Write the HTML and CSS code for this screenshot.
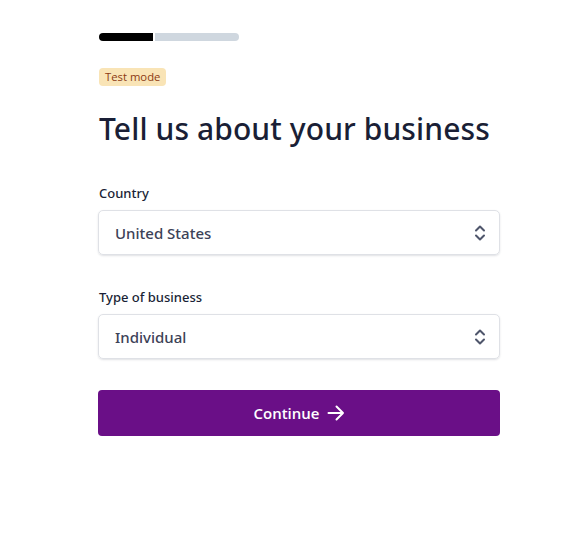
FILE: index.html
```html
<!DOCTYPE html>
<html>
<head>
<meta charset="utf-8">
<link rel="stylesheet" href="styles.css">
</head>
<body>
<main class="wrap">
  <div class="progress"><span class="done"></span><span class="todo"></span></div>
  <span class="badge">Test mode</span>
  <h1 class="title">Tell us about your business</h1>
  <div class="field">
    <label class="label">Country</label>
    <div class="select"><span>United States</span>
      <svg width="12" height="18" viewBox="0 0 12 18"><path d="M2 6.5L6 2.5L10 6.5M2 11.5L6 15.5L10 11.5" fill="none" stroke="#4f566b" stroke-width="2" stroke-linecap="round" stroke-linejoin="round"/></svg>
    </div>
  </div>
  <div class="field">
    <label class="label">Type of business</label>
    <div class="select"><span>Individual</span>
      <svg width="12" height="18" viewBox="0 0 12 18"><path d="M2 6.5L6 2.5L10 6.5M2 11.5L6 15.5L10 11.5" fill="none" stroke="#4f566b" stroke-width="2" stroke-linecap="round" stroke-linejoin="round"/></svg>
    </div>
  </div>
  <button class="btn">Continue
    <svg width="18" height="16" viewBox="0 0 18 16"><path d="M1.5 8H16M9.5 1.5L16 8L9.5 14.5" fill="none" stroke="#fff" stroke-width="2" stroke-linecap="round" stroke-linejoin="round"/></svg>
  </button>
</main>
</body>
</html>
```
FILE: styles.css
```css
* { box-sizing: border-box; }
body {
  margin: 0;
  background: #fff;
  font-family: "Open Sans", "Noto Sans", sans-serif;
  color: #1a1f36;
}
.wrap {
  width: 402px;
  margin: 0 0 0 98px;
  padding-top: 33px;
  display: flex;
  flex-direction: column;
  align-items: flex-start;
}
.progress {
  display: flex;
  gap: 2px;
  margin-left: 1px;
  height: 8px;
}
.progress .done {
  width: 54px;
  background: #000;
  border-radius: 4px 0 0 4px;
}
.progress .todo {
  width: 84px;
  background: #cfd7df;
  border-radius: 0 4px 4px 0;
}
.badge {
  margin-top: 27px;
  margin-left: 1px;
  background: #f9e4b6;
  color: #8c3a12;
  font-size: 11.3px;
  line-height: 18px;
  height: 18px;
  padding: 0 6px;
  border-radius: 4px;
}
.title {
  margin: 22px 0 0 1px;
  font-family: "Noto Sans", sans-serif;
  font-size: 30px;
  font-weight: 500;
  line-height: 42px;
  color: #1a1f36;
  letter-spacing: 0.1px;
}
.field {
  width: 100%;
  display: flex;
  flex-direction: column;
  margin-top: 33px;
}
.field + .field { margin-top: 32px; }
.label {
  margin-left: 1px;
  font-family: "Noto Sans", sans-serif;
  font-size: 13px;
  font-weight: 500;
  line-height: 20px;
  margin-bottom: 7px;
  color: #1a1f36;
}
.select {
  height: 45px;
  border: 1px solid #dfe1e6;
  border-radius: 5px;
  box-shadow: 0 1px 2px rgba(60, 66, 87, 0.16);
  display: flex;
  align-items: center;
  justify-content: space-between;
  padding: 0 13px 0 16px;
  font-family: "Noto Sans", sans-serif;
  font-size: 15px;
  font-weight: 500;
  color: #3c4257;
}
.btn {
  margin-top: 31px;
  width: 100%;
  height: 46px;
  border: 0;
  border-radius: 4px;
  background: #6a0f87;
  color: #fff;
  font-family: inherit;
  font-size: 15px;
  font-weight: 600;
  display: flex;
  align-items: center;
  justify-content: center;
  gap: 7px;
}
```
